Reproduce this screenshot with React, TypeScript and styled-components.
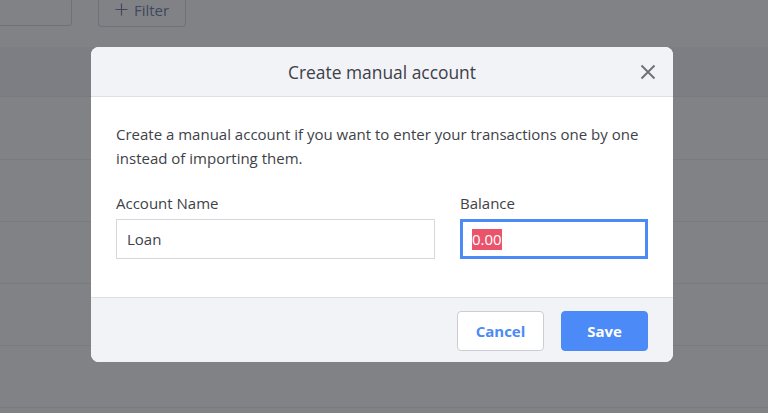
import React from "react";
import styled, { createGlobalStyle } from "styled-components";

const Global = createGlobalStyle`
  html, body { margin: 0; padding: 0; }
  body {
    width: 768px;
    height: 413px;
    overflow: hidden;
    background: #ffffff;
    font-family: "Open Sans", "Noto Sans", sans-serif;
  }
`;

const Page = styled.div`
  position: relative;
  width: 768px;
  height: 413px;
  overflow: hidden;
  background: #ffffff;
`;

const Toolbar = styled.div`
  height: 47px;
  display: flex;
  align-items: flex-start;
  gap: 26px;
`;

const SearchBox = styled.div`
  width: 72px;
  height: 27px;
  margin-top: -1px;
  box-sizing: border-box;
  border: 1px solid #d8dce2;
  border-left: none;
  border-top: none;
  border-radius: 0 0 4px 0;
`;

const FilterButton = styled.div`
  width: 88px;
  height: 28px;
  margin-top: -1px;
  box-sizing: border-box;
  border: 1px solid #d8dce2;
  border-top: none;
  border-radius: 0 0 4px 4px;
  display: flex;
  align-items: center;
  justify-content: center;
  gap: 6px;
  color: #7c8bb0;
  font-size: 15px;
  padding-bottom: 6px;
`;

const TableHeader = styled.div`
  height: 49px;
  background: #f4f6f9;
  border-bottom: 1px solid #eceff3;
`;

const TableRow = styled.div<{ $h: number }>`
  height: ${(p) => p.$h}px;
  border-bottom: 1px solid #eceff3;
  box-sizing: border-box;
`;

const Overlay = styled.div`
  position: absolute;
  inset: 0;
  background: rgba(3, 5, 13, 0.5);
  display: flex;
  justify-content: center;
  align-items: flex-start;
  padding-top: 47px;
  box-sizing: border-box;
`;

const Modal = styled.div`
  width: 582px;
  border-radius: 8px;
  overflow: hidden;
  background: #ffffff;
  margin-right: 4px;
`;

const Header = styled.div`
  height: 49px;
  background: #f2f3f7;
  border-bottom: 1px solid #dcdfe4;
  display: flex;
  align-items: center;
  justify-content: center;
  position: relative;
  color: #3c4047;
  font-size: 17.4px;
`;

const Close = styled.button`
  position: absolute;
  right: 17px;
  top: 17px;
  width: 16px;
  height: 16px;
  padding: 0;
  border: none;
  background: none;
  display: flex;
`;

const Body = styled.div`
  padding: 25px 25px 38px;
  color: #3e4248;
  font-size: 15px;
`;

const Intro = styled.p`
  margin: 0 0 23px;
  line-height: 24px;
`;

const Fields = styled.div`
  display: grid;
  grid-template-columns: 319px 188px;
  column-gap: 25px;
`;

const Field = styled.div`
  display: flex;
  flex-direction: column;
  gap: 6px;
`;

const Label = styled.label`
  font-size: 15px;
  line-height: 20px;
  color: #3e4248;
`;

const Input = styled.div<{ $focused?: boolean }>`
  height: 40px;
  box-sizing: border-box;
  border: ${(p) => (p.$focused ? "3px solid #4b8af7" : "1px solid #d5d8de")};
  padding-left: ${(p) => (p.$focused ? "9px" : "10px")};
  display: flex;
  align-items: center;
  font-size: 15px;
  color: #3e4248;
  background: #fff;
`;

const Selected = styled.span`
  background: #e9546b;
  color: #ffffff;
  line-height: 21px;
`;

const Footer = styled.div`
  height: 65px;
  box-sizing: border-box;
  background: #f2f3f7;
  border-top: 1px solid #dcdfe4;
  display: flex;
  justify-content: flex-end;
  align-items: flex-start;
  gap: 17px;
  padding: 13px 25px 0;
`;

const Button = styled.button<{ $primary?: boolean }>`
  width: 87px;
  height: 40px;
  border-radius: 4px;
  box-sizing: border-box;
  font-family: "Open Sans", "Noto Sans", sans-serif;
  font-size: 15px;
  font-weight: 700;
  border: ${(p) => (p.$primary ? "1px solid #4b8af7" : "1px solid #c9cdd4")};
  background: ${(p) => (p.$primary ? "#4b8af7" : "#ffffff")};
  color: ${(p) => (p.$primary ? "#ffffff" : "#4b8af7")};
  padding: 0;
`;

export default function App() {
  return (
    <>
      <Global />
      <Page>
        <Toolbar>
          <SearchBox />
          <FilterButton>
            <svg width="13" height="13" viewBox="0 0 13 13">
              <path d="M6.5 0.5v12M0.5 6.5h12" stroke="#7c8bb0" strokeWidth="1.2" fill="none" />
            </svg>
            Filter
          </FilterButton>
        </Toolbar>
        <TableHeader />
        <TableRow $h={63} />
        <TableRow $h={62} />
        <TableRow $h={62} />
        <TableRow $h={62} />
        <TableRow $h={62} />
        <Overlay>
          <Modal>
            <Header>
              Create manual account
              <Close aria-label="Close">
                <svg width="16" height="16" viewBox="0 0 16 16">
                  <path d="M1.5 1.5l13 13M14.5 1.5l-13 13" stroke="#6e7279" strokeWidth="2" fill="none" />
                </svg>
              </Close>
            </Header>
            <Body>
              <Intro>
                Create a manual account if you want to enter your transactions one by one
                instead of importing them.
              </Intro>
              <Fields>
                <Field>
                  <Label>Account Name</Label>
                  <Input>Loan</Input>
                </Field>
                <Field>
                  <Label>Balance</Label>
                  <Input $focused>
                    <Selected>0.00</Selected>
                  </Input>
                </Field>
              </Fields>
            </Body>
            <Footer>
              <Button>Cancel</Button>
              <Button $primary>Save</Button>
            </Footer>
          </Modal>
        </Overlay>
      </Page>
    </>
  );
}
